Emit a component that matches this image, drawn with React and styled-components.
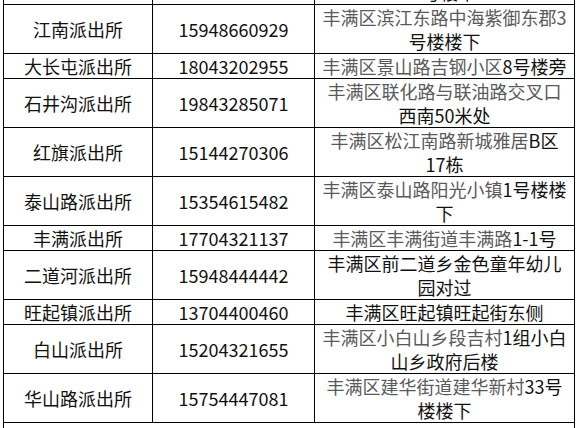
import styled, { createGlobalStyle } from "styled-components"

const rows = [
  { name: "", phone: "", light: "丰满区吉林大街新城花园小区13", dark: "号楼下" },
  { name: "江南派出所", phone: "15948660929", light: "丰满区滨江东路中海紫御东郡3", dark: "号楼楼下" },
  { name: "大长屯派出所", phone: "18043202955", light: "丰满区景山路吉钢小区", dark: "8号楼旁" },
  { name: "石井沟派出所", phone: "19843285071", light: "丰满区联化路与联油路交叉口", dark: "西南50米处" },
  { name: "红旗派出所", phone: "15144270306", light: "丰满区松江南路新城雅居", dark: "B区", tail: "17栋" },
  { name: "泰山路派出所", phone: "15354615482", light: "丰满区泰山路阳光小镇", dark: "1号楼楼下" },
  { name: "丰满派出所", phone: "17704321137", light: "丰满区丰满街道丰满路", dark: "1-1号" },
  { name: "二道河派出所", phone: "15948444442", light: "", dark: "丰满区前二道乡金色童年幼儿园对过" },
  { name: "旺起镇派出所", phone: "13704400460", light: "", dark: "丰满区旺起镇旺起街东侧" },
  { name: "白山派出所", phone: "15204321655", light: "丰满区小白山乡段吉村", dark: "1组小白山乡政府后楼" },
  { name: "华山路派出所", phone: "15754447081", light: "丰满区建华街道建华新村", dark: "33号楼楼下" },
]

const GlobalStyle = createGlobalStyle`
  html, body {
    margin: 0;
    padding: 0;
    background: #fff;
    overflow: hidden;
  }
`

const Page = styled.div`
  padding-left: 3px;
  height: 428px;
  overflow: hidden;
  font-family: "Noto Sans CJK SC", "Noto Sans", sans-serif;
`

const Table = styled.table`
  margin-top: -45px;
  width: 571px;
  table-layout: fixed;
  border-collapse: collapse;
  font-size: 18px;
  line-height: 24px;
`

const Cell = styled.td`
  border: 1px solid #000;
  padding: 0 4px;
  text-align: center;
  vertical-align: middle;
  color: #111;
  word-break: break-all;
`

const Light = styled.span`
  color: #5a5a5a;
`

const Tail = styled.span`
  white-space: nowrap;
`

const NoteCell = styled.td`
  border: 1px solid #000;
  height: 40px;
`

export default function App() {
  return (
    <Page>
      <GlobalStyle />
      <Table>
        <colgroup>
          <col style={{ width: 149 }} />
          <col style={{ width: 162 }} />
          <col style={{ width: 260 }} />
        </colgroup>
        <tbody>
          {rows.map((row, i) => (
            <tr key={i}>
              <Cell>{row.name}</Cell>
              <Cell>{row.phone}</Cell>
              <Cell>
                <Light>{row.light}</Light>
                {row.dark}
                {row.tail && <Tail>{row.tail}</Tail>}
              </Cell>
            </tr>
          ))}
          <tr>
            <NoteCell colSpan={3} />
          </tr>
        </tbody>
      </Table>
    </Page>
  )
}
